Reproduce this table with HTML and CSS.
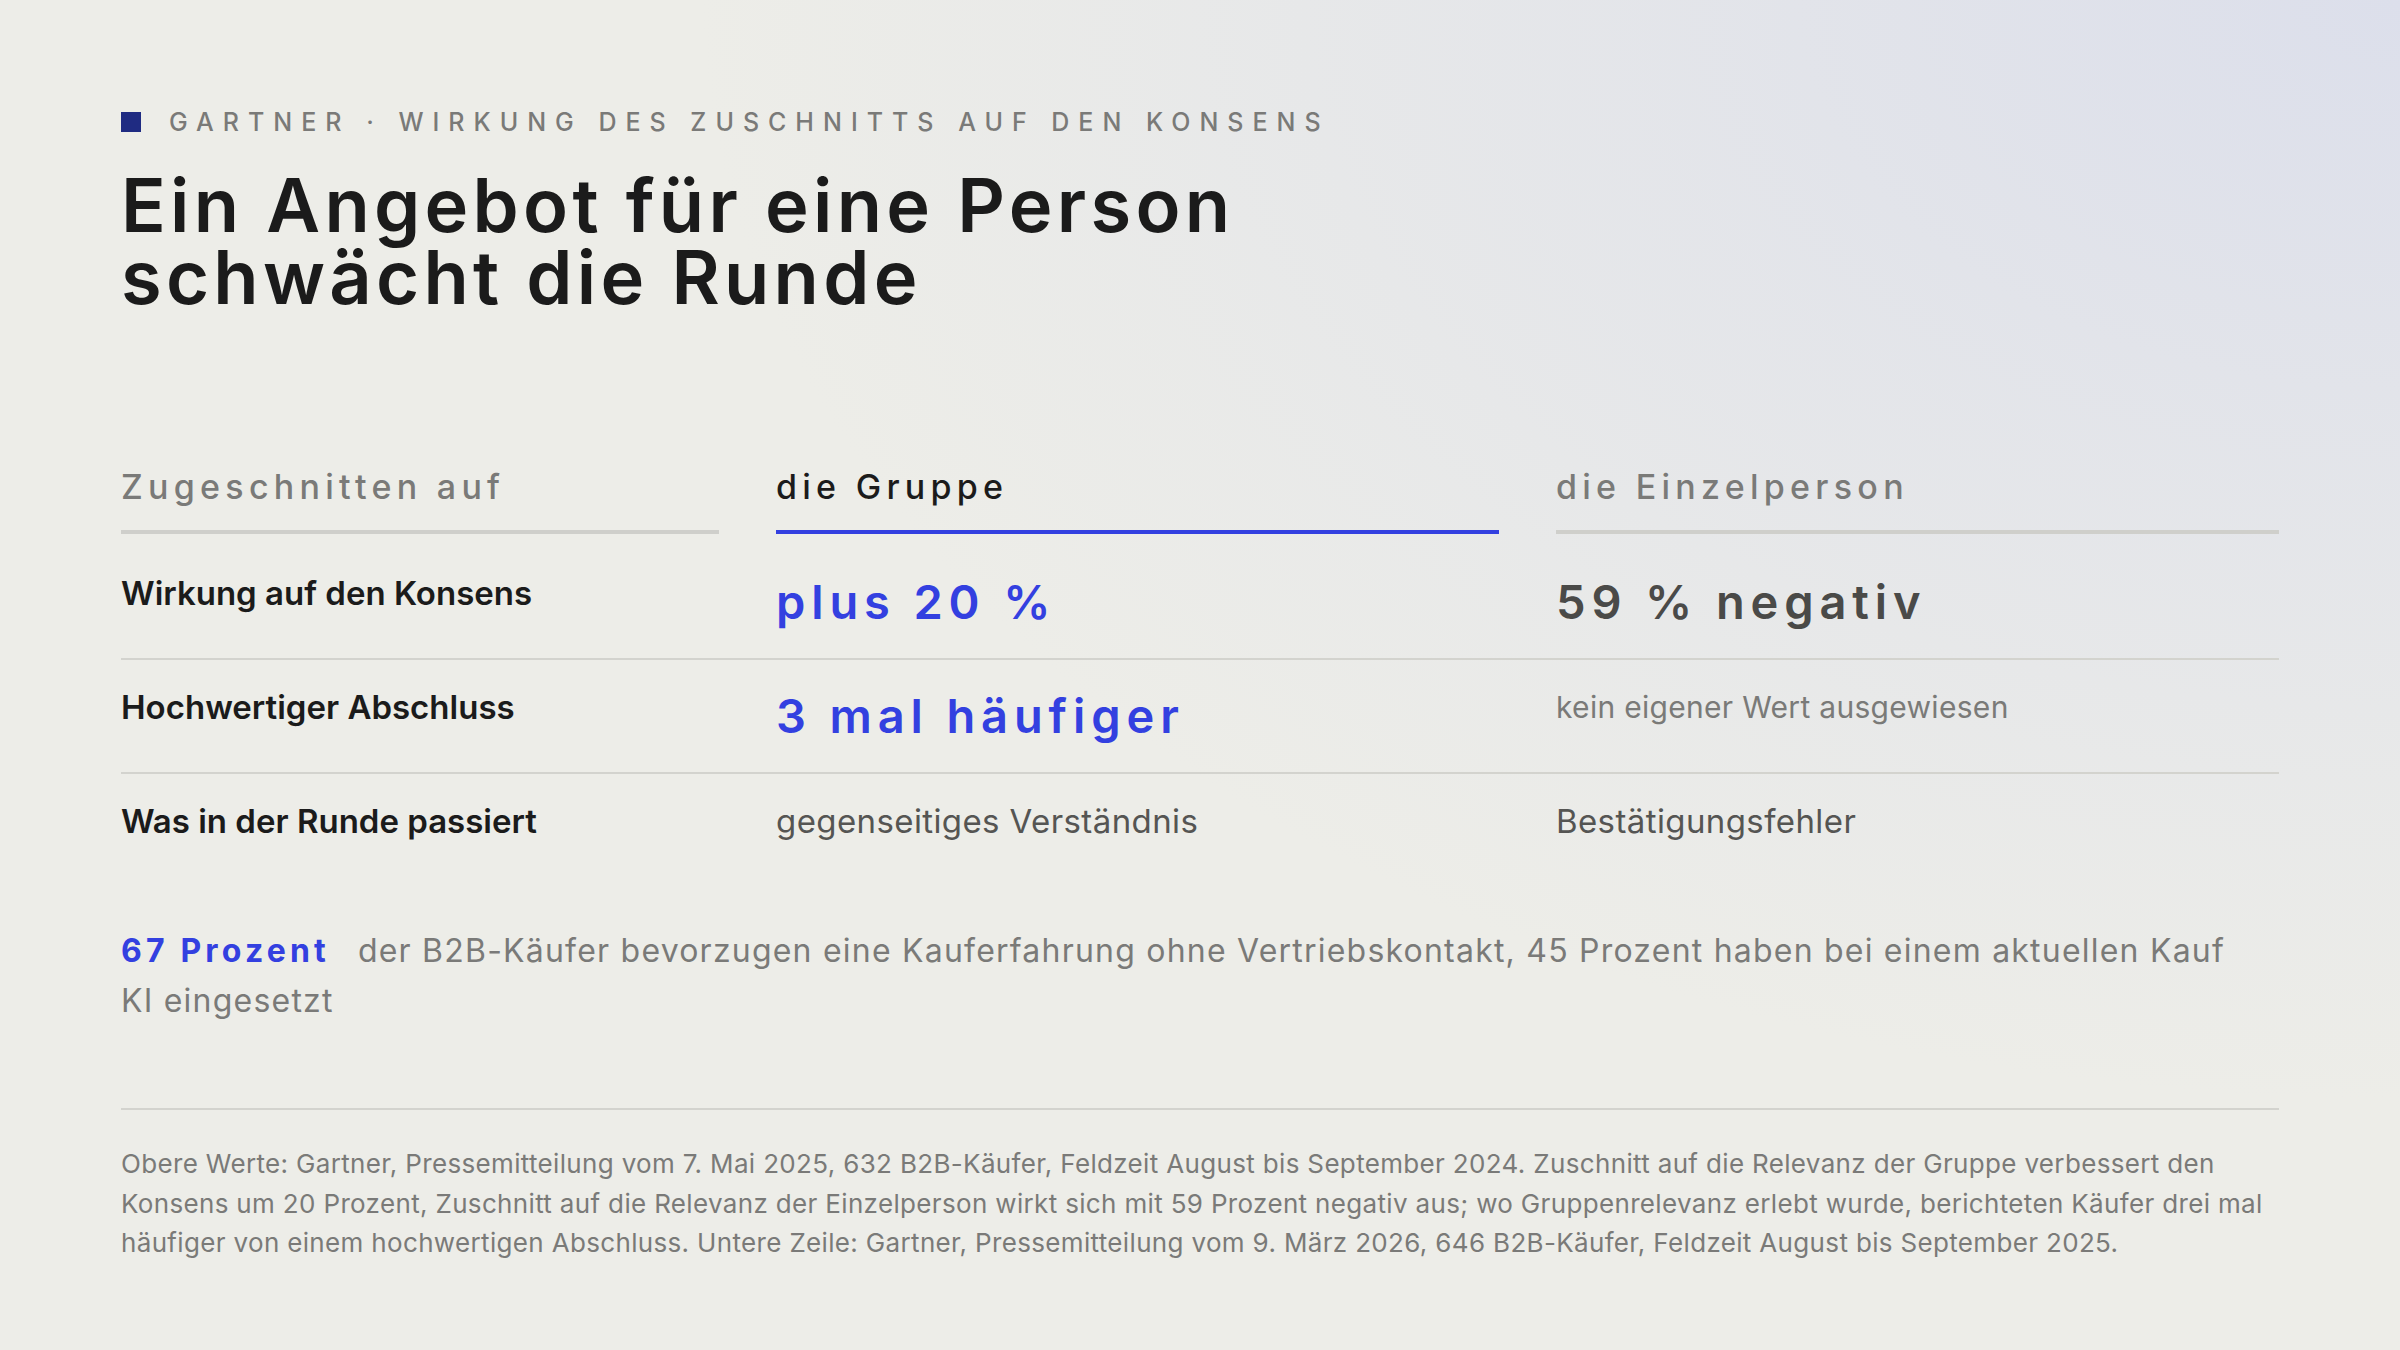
FILE: index.html
```html
<!DOCTYPE html>
<html lang="de">
<head>
<meta charset="utf-8">
<title>Gartner · Wirkung des Zuschnitts auf den Konsens</title>
<link rel="stylesheet" href="styles.css">
</head>
<body>
<main class="slide">
  <header class="intro">
    <div class="eyebrow">
      <span class="eyebrow-mark"></span>
      <span class="eyebrow-text">GARTNER · WIRKUNG DES ZUSCHNITTS AUF DEN KONSENS</span>
    </div>
    <h1 class="title"><span class="title-line">Ein Angebot für eine Person</span><span class="title-line">schwächt die Runde</span></h1>
  </header>

  <section class="compare">
    <div class="compare-head">
      <div class="head-cell head-muted">Zugeschnitten auf</div>
      <div class="head-cell head-active">die Gruppe</div>
      <div class="head-cell head-muted">die Einzelperson</div>
    </div>
    <div class="compare-row">
      <div class="row-label">Wirkung auf den Konsens</div>
      <div class="row-value value-accent">plus 20 %</div>
      <div class="row-value value-dark">59 % negativ</div>
    </div>
    <div class="compare-row">
      <div class="row-label">Hochwertiger Abschluss</div>
      <div class="row-value value-accent">3 mal häufiger</div>
      <div class="row-note note-light">kein eigener Wert ausgewiesen</div>
    </div>
    <div class="compare-row">
      <div class="row-label">Was in der Runde passiert</div>
      <div class="row-note">gegenseitiges Verständnis</div>
      <div class="row-note">Bestätigungsfehler</div>
    </div>
  </section>

  <p class="stat"><span class="stat-figure">67 Prozent</span>der B2B-Käufer bevorzugen eine Kauferfahrung ohne Vertriebskontakt, 45 Prozent haben bei einem aktuellen Kauf KI eingesetzt</p>

  <footer class="source">
    <p>Obere Werte: Gartner, Pressemitteilung vom 7. Mai 2025, 632 B2B-Käufer, Feldzeit August bis September 2024. Zuschnitt auf die Relevanz der Gruppe verbessert den Konsens um 20 Prozent, Zuschnitt auf die Relevanz der Einzelperson wirkt sich mit 59 Prozent negativ aus; wo Gruppenrelevanz erlebt wurde, berichteten Käufer drei mal häufiger von einem hochwertigen Abschluss. Untere Zeile: Gartner, Pressemitteilung vom 9. März 2026, 646 B2B-Käufer, Feldzeit August bis September 2025.</p>
  </footer>
</main>
</body>
</html>
```

FILE: styles.css
```css
* { box-sizing: border-box; }

html, body {
  margin: 0;
  padding: 0;
}

body {
  width: 2400px;
  height: 1350px;
  overflow: hidden;
  font-family: "Inter", "Noto Sans", "Liberation Sans", sans-serif;
  color: #1b1b1b;
  background-color: #edede8;
  background-image: radial-gradient(ellipse 1700px 1100px at 100% 0%, #dcdfeb 0%, rgba(237, 237, 232, 0) 100%);
}

.slide {
  padding: 107px 121px 0 121px;
  display: flex;
  flex-direction: column;
}

/* intro */
.eyebrow {
  display: flex;
  align-items: center;
  gap: 28px;
  height: 30px;
}

.eyebrow-mark {
  width: 20px;
  height: 20px;
  background: #1f2b82;
  flex: none;
}

.eyebrow-text {
  font-size: 25px;
  line-height: 30px;
  font-weight: 500;
  letter-spacing: 0.36em;
  color: #7a7a78;
}

.title {
  margin: 32px 0 0 0;
  font-size: 74px;
  line-height: 72px;
  font-weight: 600;
  letter-spacing: 0.058em;
  color: #1b1b1b;
  display: flex;
  flex-direction: column;
}

.title-line {
  display: block;
  height: 72px;
}

/* comparison table */
.compare {
  margin-top: 154px;
  display: flex;
  flex-direction: column;
}

.compare-head,
.compare-row {
  display: grid;
  grid-template-columns: 598px 1fr 1fr;
  column-gap: 57px;
}

.compare-head {
  margin-bottom: 12px;
}

.head-cell {
  font-size: 34px;
  line-height: 40px;
  font-weight: 500;
  letter-spacing: 0.155em;
  padding-bottom: 23px;
  border-bottom: 4px solid #cfcfcb;
}

.head-muted { color: #7a7a78; }

.head-active {
  color: #1b1b1b;
  border-bottom-color: #3340e0;
}

.compare-row {
  padding: 26px 0;
  border-bottom: 2px solid #d3d3ce;
  align-items: start;
}

.compare-row:last-child {
  border-bottom: none;
}

.row-label {
  font-size: 33px;
  line-height: 42px;
  font-weight: 600;
  color: #1b1b1b;
}

.row-value {
  font-size: 47px;
  line-height: 60px;
  font-weight: 600;
  letter-spacing: 0.125em;
}

.value-accent { color: #3340e0; }
.value-dark { color: #4a4a48; }

.row-note {
  font-size: 33px;
  line-height: 42px;
  letter-spacing: 0.012em;
  color: #555553;
}

.note-light {
  font-size: 30px;
  letter-spacing: 0.01em;
  color: #7a7a78;
}

/* stat paragraph */
.stat {
  margin: 58px 0 0 0;
  max-width: 2130px;
  font-size: 32px;
  line-height: 50px;
  letter-spacing: 0.038em;
  color: #7a7a78;
}

.stat-figure {
  font-weight: 700;
  color: #3340e0;
  letter-spacing: 0.13em;
  margin-right: 28px;
}

/* source footnote */
.source {
  margin-top: 82px;
  border-top: 2px solid #d3d3ce;
  padding-top: 34px;
}

.source p {
  margin: 0;
  font-size: 26px;
  line-height: 39.5px;
  letter-spacing: 0.013em;
  color: #7a7a78;
}
```
